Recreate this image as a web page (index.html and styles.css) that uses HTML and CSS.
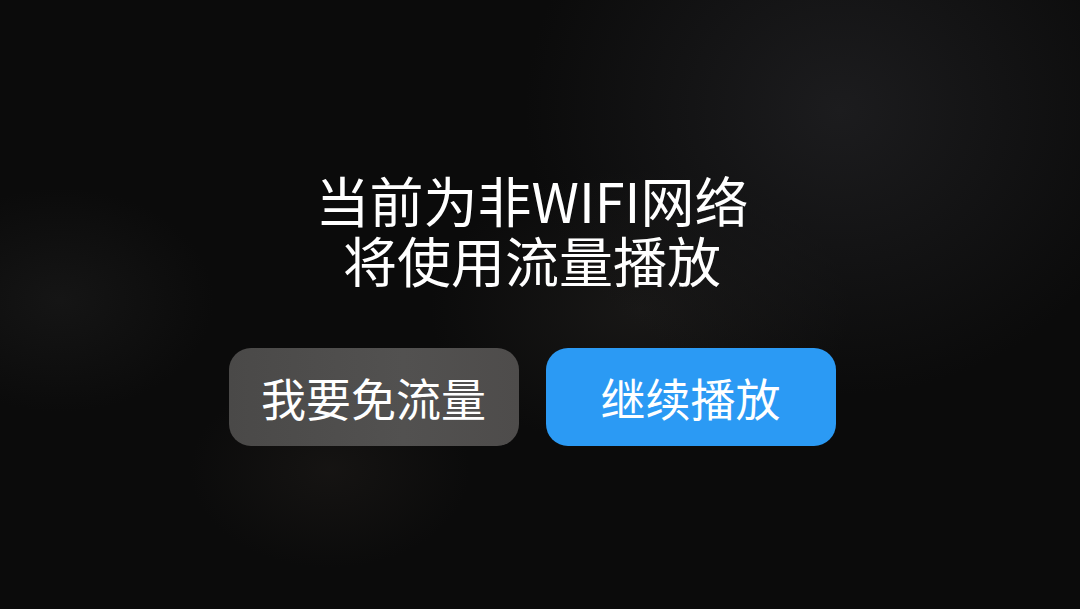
FILE: index.html
```html
<!DOCTYPE html>
<html lang="zh-CN">
<head>
<meta charset="utf-8">
<link rel="stylesheet" href="styles.css">
</head>
<body>
<main class="overlay">
  <p class="message">当前为非WIFI网络<br>将使用流量播放</p>
  <div class="actions">
    <button class="btn btn-secondary">我要免流量</button>
    <button class="btn btn-primary">继续播放</button>
  </div>
</main>
</body>
</html>
```

FILE: styles.css
```css
html, body {
  margin: 0;
  padding: 0;
  width: 1080px;
  height: 609px;
  overflow: hidden;
}

body {
  background-color: #0b0b0b;
  background-image:
    radial-gradient(ellipse 420px 380px at 840px 110px, rgba(28,28,30,1), rgba(11,11,11,0) 75%),
    radial-gradient(ellipse 300px 200px at 640px 310px, rgba(40,38,36,0.45), rgba(0,0,0,0) 70%),
    radial-gradient(ellipse 220px 160px at 60px 300px, rgba(40,40,40,0.35), rgba(0,0,0,0) 70%),
    radial-gradient(ellipse 200px 140px at 330px 470px, rgba(45,40,36,0.3), rgba(0,0,0,0) 70%);
  font-family: "Noto Sans CJK SC", "Noto Sans", sans-serif;
  color: #ffffff;
}

.overlay {
  display: flex;
  flex-direction: column;
  align-items: center;
  gap: 58px;
  padding-top: 170px;
  padding-right: 16px;
}

.message {
  margin: 0;
  font-size: 54px;
  line-height: 60px;
  text-align: center;
  font-weight: 400;
}

.actions {
  display: flex;
  gap: 27px;
}

.btn {
  width: 290px;
  height: 98px;
  border: none;
  border-radius: 22px;
  font-family: "Noto Sans CJK SC", "Noto Sans", sans-serif;
  font-size: 45px;
  color: #ffffff;
  padding: 0;
  display: flex;
  align-items: center;
  justify-content: center;
}

.btn-secondary {
  background: linear-gradient(90deg, #4a4948 0%, #525150 60%, #4e4c4b 100%);
}

.btn-primary {
  background: #2b9af4;
}
```
